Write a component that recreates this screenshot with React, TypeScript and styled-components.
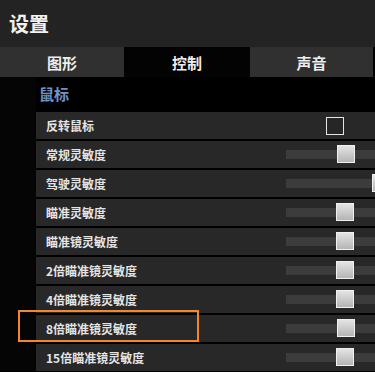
import styled, { createGlobalStyle } from 'styled-components';

const GlobalStyle = createGlobalStyle`
    body {
        margin: 0;
        background: #000;
        font-family: "Noto Sans CJK SC", "Noto Sans", sans-serif;
    }
`;

const Page = styled.div`
    position: relative;
    width: 375px;
    height: 372px;
    overflow: hidden;
    background: #000;
`;

const Header = styled.header`
    height: 47px;
    display: flex;
    align-items: center;
    padding-left: 9px;
    background: #232323;
`;

const Title = styled.h1`
    margin: 0;
    font-size: 20px;
    font-weight: 700;
    color: #f2f2f2;
    letter-spacing: 0;
`;

const Tabs = styled.nav`
    display: grid;
    grid-template-columns: 124px 126px 123px;
    height: 30px;
`;

const Tab = styled.div<{ $active?: boolean }>`
    display: flex;
    align-items: center;
    justify-content: center;
    font-size: 15px;
    font-weight: 700;
    color: #eeeeee;
    background: ${p => (p.$active ? '#030303' : '#303030')};
`;

const Body = styled.div`
    display: flex;
`;

const Side = styled.div`
    width: 36px;
    flex-shrink: 0;
    background: #050505;
`;

const Content = styled.div`
    flex: 1;
    display: flex;
    flex-direction: column;
    gap: 2px;
`;

const Section = styled.div`
    height: 33px;
    display: flex;
    align-items: center;
    padding-left: 3px;
    font-size: 15px;
    font-weight: 700;
    color: #7092c6;
`;

const Row = styled.div`
    height: 27px;
    display: flex;
    align-items: center;
    justify-content: space-between;
    padding-left: 10px;
    background: #282828;
`;

const Label = styled.span`
    font-size: 12px;
    font-weight: 700;
    color: #e4e4e4;
`;

const Checkbox = styled.div`
    width: 16px;
    height: 16px;
    margin-right: 31px;
    border: 1.5px solid #e6e6e6;
    background: #262626;
`;

const Slider = styled.div`
    position: relative;
    width: 89px;
    height: 9px;
    background: #3c3c3c;
`;

const Thumb = styled.div`
    position: absolute;
    top: -5px;
    width: 18px;
    height: 18px;
    background: linear-gradient(#e4e4e4, #b4b4b4);
    border: 1px solid #f0f0f0;
    box-sizing: border-box;
`;

const Highlight = styled.div`
    position: absolute;
    left: 18px;
    top: 310px;
    width: 181px;
    height: 32px;
    box-sizing: border-box;
    border: 2px solid #f5862d;
`;

const sliders = [
    { label: '常规灵敏度', pos: 51 },
    { label: '驾驶灵敏度', pos: 86 },
    { label: '瞄准灵敏度', pos: 50 },
    { label: '瞄准镜灵敏度', pos: 50 },
    { label: '2倍瞄准镜灵敏度', pos: 50 },
    { label: '4倍瞄准镜灵敏度', pos: 50 },
    { label: '8倍瞄准镜灵敏度', pos: 51 },
    { label: '15倍瞄准镜灵敏度', pos: 50 },
];

const App = () => {
    return (
        <Page>
            <GlobalStyle />
            <Header>
                <Title>设置</Title>
            </Header>
            <Tabs>
                <Tab>图形</Tab>
                <Tab $active>控制</Tab>
                <Tab>声音</Tab>
            </Tabs>
            <Body>
                <Side />
                <Content>
                    <Section>鼠标</Section>
                    <Row>
                        <Label>反转鼠标</Label>
                        <Checkbox />
                    </Row>
                    {sliders.map(s => (
                        <Row key={s.label}>
                            <Label>{s.label}</Label>
                            <Slider>
                                <Thumb style={{ left: s.pos }} />
                            </Slider>
                        </Row>
                    ))}
                </Content>
            </Body>
            <Highlight />
        </Page>
    );
};

export default App;
